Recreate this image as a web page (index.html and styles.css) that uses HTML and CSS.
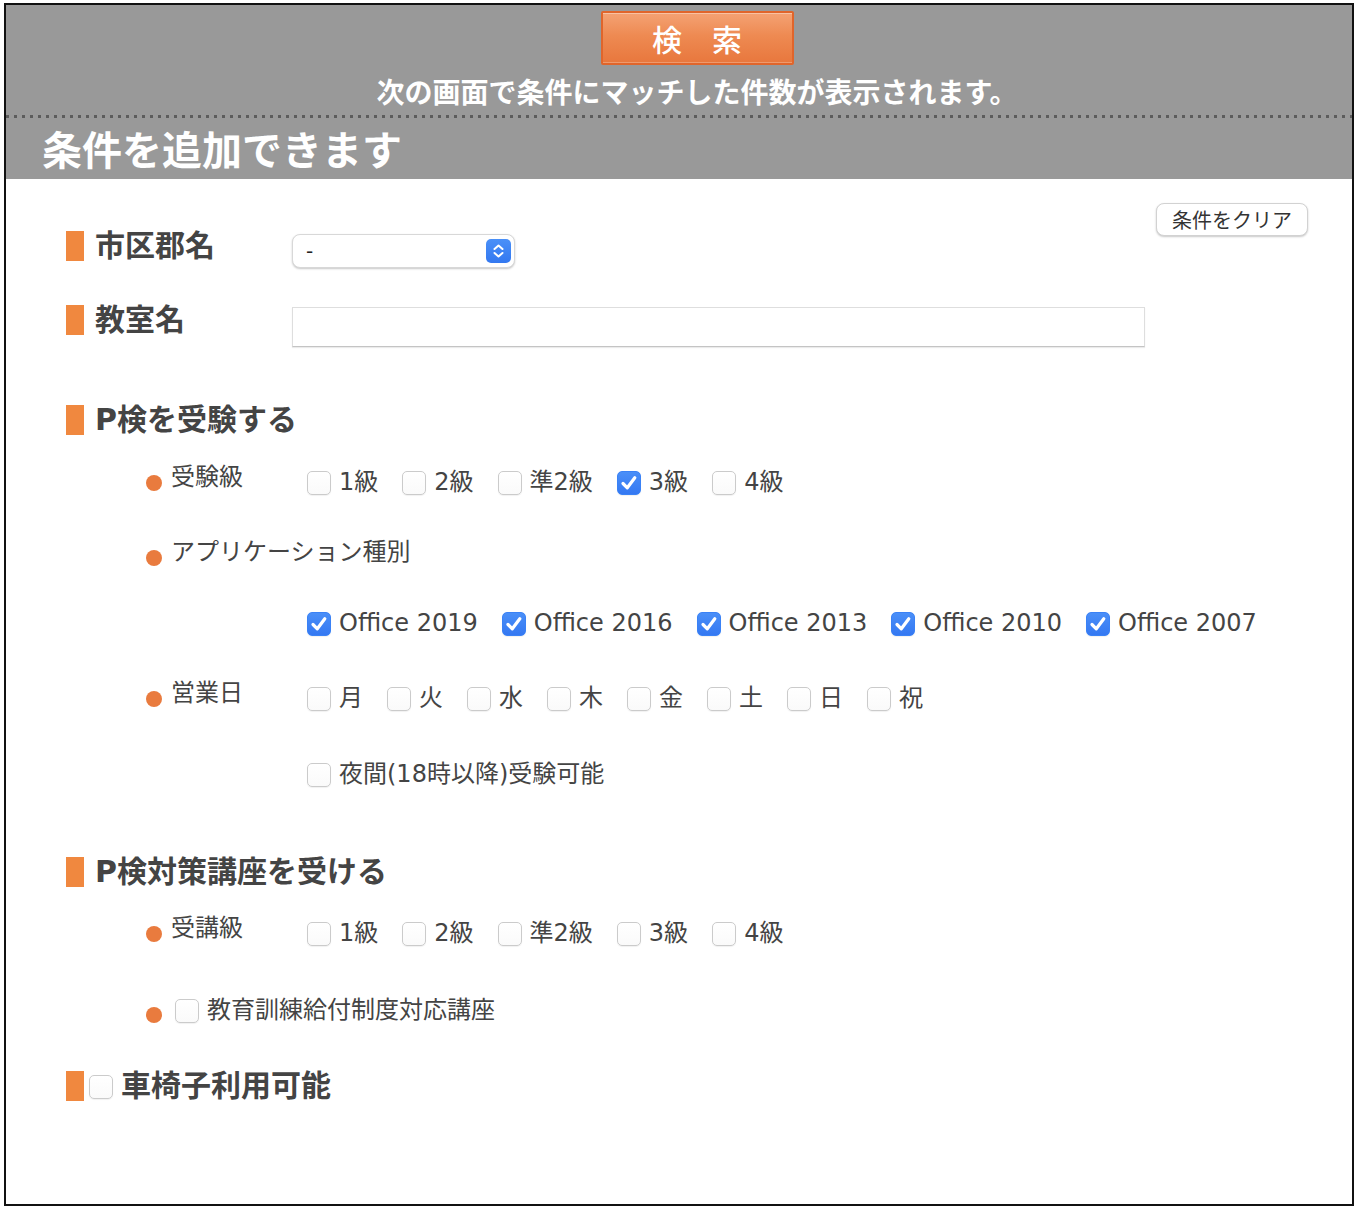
FILE: index.html
```html
<!DOCTYPE html>
<html lang="ja">
<head>
<meta charset="utf-8">
<title>検索条件</title>
<link rel="stylesheet" href="styles.css">
</head>
<body>
<div class="frame">
  <div class="header">
    <div class="header-top">
      <button class="search-btn" type="button">検　索</button>
      <p class="notice">次の画面で条件にマッチした件数が表示されます。</p>
    </div>
    <div class="dots"></div>
    <h1 class="title">条件を追加できます</h1>
  </div>

  <div class="content">
    <button class="clear-btn" type="button">条件をクリア</button>

    <div class="field f-city">
      <span class="marker"></span>
      <span class="field-label">市区郡名</span>
      <div class="select">
        <span class="select-value">-</span>
        <span class="select-arrow">
          <svg width="25" height="24" viewBox="0 0 25 24"><path d="M8.5 10 L12.5 6.5 L16.5 10 M8.5 14 L12.5 17.5 L16.5 14" fill="none" stroke="#fff" stroke-width="2" stroke-linecap="round" stroke-linejoin="round"/></svg>
        </span>
      </div>
    </div>

    <div class="field f-room">
      <span class="marker"></span>
      <span class="field-label">教室名</span>
      <div class="text-input"></div>
    </div>

    <div class="field sec-1">
      <span class="marker"></span>
      <span class="sec-label">P検を受験する</span>
    </div>

    <div class="sub r-grade">
      <span class="bullet"></span>
      <span class="sub-label">受験級</span>
      <div class="opts">
        <span class="opt"><span class="cb"></span><span class="opt-text">1級</span></span>
        <span class="opt"><span class="cb"></span><span class="opt-text">2級</span></span>
        <span class="opt"><span class="cb"></span><span class="opt-text">準2級</span></span>
        <span class="opt"><span class="cb on"><svg width="22" height="22" viewBox="0 0 22 22"><path d="M5 11.5 L9.3 15.8 L16.8 5.8" fill="none" stroke="#fff" stroke-width="3.2" stroke-linecap="round" stroke-linejoin="round"/></svg></span><span class="opt-text">3級</span></span>
        <span class="opt"><span class="cb"></span><span class="opt-text">4級</span></span>
      </div>
    </div>

    <div class="sub r-app">
      <span class="bullet"></span>
      <span class="sub-label wide">アプリケーション種別</span>
    </div>

    <div class="sub r-office">
      <span class="spacer"></span>
      <div class="opts">
        <span class="opt"><span class="cb on"><svg width="22" height="22" viewBox="0 0 22 22"><path d="M5 11.5 L9.3 15.8 L16.8 5.8" fill="none" stroke="#fff" stroke-width="3.2" stroke-linecap="round" stroke-linejoin="round"/></svg></span><span class="opt-text">Office 2019</span></span>
        <span class="opt"><span class="cb on"><svg width="22" height="22" viewBox="0 0 22 22"><path d="M5 11.5 L9.3 15.8 L16.8 5.8" fill="none" stroke="#fff" stroke-width="3.2" stroke-linecap="round" stroke-linejoin="round"/></svg></span><span class="opt-text">Office 2016</span></span>
        <span class="opt"><span class="cb on"><svg width="22" height="22" viewBox="0 0 22 22"><path d="M5 11.5 L9.3 15.8 L16.8 5.8" fill="none" stroke="#fff" stroke-width="3.2" stroke-linecap="round" stroke-linejoin="round"/></svg></span><span class="opt-text">Office 2013</span></span>
        <span class="opt"><span class="cb on"><svg width="22" height="22" viewBox="0 0 22 22"><path d="M5 11.5 L9.3 15.8 L16.8 5.8" fill="none" stroke="#fff" stroke-width="3.2" stroke-linecap="round" stroke-linejoin="round"/></svg></span><span class="opt-text">Office 2010</span></span>
        <span class="opt"><span class="cb on"><svg width="22" height="22" viewBox="0 0 22 22"><path d="M5 11.5 L9.3 15.8 L16.8 5.8" fill="none" stroke="#fff" stroke-width="3.2" stroke-linecap="round" stroke-linejoin="round"/></svg></span><span class="opt-text">Office 2007</span></span>
      </div>
    </div>

    <div class="sub r-days">
      <span class="bullet"></span>
      <span class="sub-label">営業日</span>
      <div class="opts">
        <span class="opt"><span class="cb"></span><span class="opt-text">月</span></span>
        <span class="opt"><span class="cb"></span><span class="opt-text">火</span></span>
        <span class="opt"><span class="cb"></span><span class="opt-text">水</span></span>
        <span class="opt"><span class="cb"></span><span class="opt-text">木</span></span>
        <span class="opt"><span class="cb"></span><span class="opt-text">金</span></span>
        <span class="opt"><span class="cb"></span><span class="opt-text">土</span></span>
        <span class="opt"><span class="cb"></span><span class="opt-text">日</span></span>
        <span class="opt"><span class="cb"></span><span class="opt-text">祝</span></span>
      </div>
    </div>

    <div class="sub r-night">
      <span class="spacer"></span>
      <div class="opts">
        <span class="opt"><span class="cb"></span><span class="opt-text">夜間(18時以降)受験可能</span></span>
      </div>
    </div>

    <div class="field sec-2">
      <span class="marker"></span>
      <span class="sec-label">P検対策講座を受ける</span>
    </div>

    <div class="sub r-course">
      <span class="bullet"></span>
      <span class="sub-label">受講級</span>
      <div class="opts">
        <span class="opt"><span class="cb"></span><span class="opt-text">1級</span></span>
        <span class="opt"><span class="cb"></span><span class="opt-text">2級</span></span>
        <span class="opt"><span class="cb"></span><span class="opt-text">準2級</span></span>
        <span class="opt"><span class="cb"></span><span class="opt-text">3級</span></span>
        <span class="opt"><span class="cb"></span><span class="opt-text">4級</span></span>
      </div>
    </div>

    <div class="sub r-benefit">
      <span class="bullet low"></span>
      <span class="opt benefit"><span class="cb"></span><span class="opt-text">教育訓練給付制度対応講座</span></span>
    </div>

    <div class="field sec-3">
      <span class="marker"></span>
      <span class="cb sec-cb"></span>
      <span class="sec-label tight">車椅子利用可能</span>
    </div>
  </div>
</div>
</body>
</html>
```

FILE: styles.css
```css
html, body {
  margin: 0;
  background: #fff;
}

body {
  padding: 3px 0 0 4px;
  font-family: "DejaVu Sans", "Noto Sans CJK JP", sans-serif;
  color: #444;
}

.frame {
  width: 1346px;
  height: 1199px;
  border: 2px solid #111;
  background: #fff;
}

/* ---------- header ---------- */
.header {
  background: #999;
}

.header-top {
  padding: 6px 0 0 36px;
  text-align: center;
}

.search-btn {
  display: inline-block;
  vertical-align: top;
  width: 193px;
  height: 54px;
  margin: 0;
  padding: 0;
  border: 2px solid #e0652b;
  border-radius: 2px;
  background: linear-gradient(#f4a274 0%, #ee8a52 45%, #e8773d 100%);
  box-shadow: inset 0 1px 0 rgba(255, 255, 255, 0.35), inset 0 -1px 0 rgba(255, 255, 255, 0.25);
  color: #fff;
  font-family: "Noto Sans CJK JP", sans-serif;
  font-weight: 500;
  font-size: 30px;
  line-height: 48px;
}

.notice {
  margin: 9px 0 0;
  font-family: "Noto Sans CJK JP", sans-serif;
  font-weight: bold;
  font-size: 28px;
  line-height: 34px;
  color: #fff;
}

.dots {
  margin-top: 7px;
  height: 3px;
  background: repeating-linear-gradient(90deg, #5c5c5c 0 3px, transparent 3px 8px);
}

.title {
  margin: 0;
  padding-left: 36px;
  height: 61px;
  font-family: "Noto Sans CJK JP", sans-serif;
  font-weight: bold;
  font-size: 40px;
  line-height: 61px;
  color: #fff;
}

/* ---------- content ---------- */
.content {
  display: flow-root;
  padding: 0 44px 0 60px;
}

.clear-btn {
  float: right;
  margin: 24px 0 0;
  width: 152px;
  height: 33px;
  padding: 0;
  border: 1px solid #d2d2d2;
  border-radius: 8px;
  background: #fff;
  box-shadow: 0 1px 2px rgba(0, 0, 0, 0.22);
  font-family: "Noto Sans CJK JP", sans-serif;
  font-size: 20px;
  line-height: 31px;
  color: #333;
}

.field {
  display: flex;
  align-items: flex-start;
}

.marker {
  flex: none;
  width: 18px;
  height: 30px;
  background: #f0883f;
}

.field-label {
  flex: none;
  width: 197px;
  margin-left: 11px;
  font-weight: bold;
  font-size: 30px;
  line-height: 30px;
}

.sec-label {
  margin-left: 11px;
  font-weight: bold;
  font-size: 30px;
  line-height: 30px;
}

.sec-label.tight {
  margin-left: 8px;
}

.f-city {
  margin-top: 52px;
}

.f-room {
  margin-top: 37px;
}

.select {
  margin-top: 3px;
  width: 223px;
  height: 34px;
  box-sizing: border-box;
  display: flex;
  align-items: center;
  justify-content: space-between;
  padding: 0 3px 0 13px;
  border: 1px solid #d8d8d8;
  border-radius: 8px;
  background: #fff;
  box-shadow: 0 1px 2px rgba(0, 0, 0, 0.22);
}

.select-value {
  font-size: 20px;
  color: #222;
}

.select-arrow {
  display: flex;
  width: 25px;
  height: 24px;
  border-radius: 5px;
  background: linear-gradient(#4a90f8, #3378f0);
}

.text-input {
  margin-top: 2px;
  width: 853px;
  height: 40px;
  box-sizing: border-box;
  border: 1px solid #dedede;
  border-bottom-color: #c4c4c4;
  background: #fff;
  box-shadow: 0 1px 1px rgba(0, 0, 0, 0.08);
}

.sec-1 {
  margin-top: 58px;
}

.sec-2 {
  margin-top: 70px;
}

.sec-3 {
  margin-top: 48px;
}

.sub {
  display: flex;
  align-items: flex-start;
  height: 24px;
  padding-left: 80px;
}

.bullet {
  flex: none;
  width: 16px;
  height: 16px;
  margin-top: 4px;
  border-radius: 50%;
  background: #e97b3e;
}

.bullet.low {
  margin-top: 8px;
}

.sub-label {
  flex: none;
  width: 136px;
  margin: -6px 0 0 9px;
  font-size: 24px;
  line-height: 24px;
}

.sub-label.wide {
  width: auto;
}

.spacer {
  flex: none;
  width: 161px;
}

.opts {
  display: flex;
  align-items: flex-start;
}

.opt {
  display: flex;
  align-items: flex-start;
  margin-right: 24px;
  font-size: 24px;
  line-height: 24px;
  white-space: nowrap;
}

.opt-text {
  margin: -1px 0 0 8px;
}

.cb {
  flex: none;
  display: flex;
  align-items: center;
  justify-content: center;
  width: 24px;
  height: 24px;
  box-sizing: border-box;
  border: 1px solid #cbcbcb;
  border-radius: 5px;
  background: linear-gradient(#fff, #fafafa);
  box-shadow: 0 1px 1px rgba(0, 0, 0, 0.06);
}

.cb.on {
  border-color: #3a82f6;
  background: linear-gradient(#4a8ff8, #3478f2);
}

.r-grade {
  margin-top: 36px;
}

.r-app {
  margin-top: 51px;
}

.r-office {
  margin-top: 42px;
}

.r-days {
  margin-top: 51px;
}

.r-night {
  margin-top: 52px;
}

.r-course {
  margin-top: 35px;
}

.r-benefit {
  margin-top: 53px;
}

.benefit {
  margin-left: 13px;
}

.sec-cb {
  margin: 4px 0 0 5px;
}
```
